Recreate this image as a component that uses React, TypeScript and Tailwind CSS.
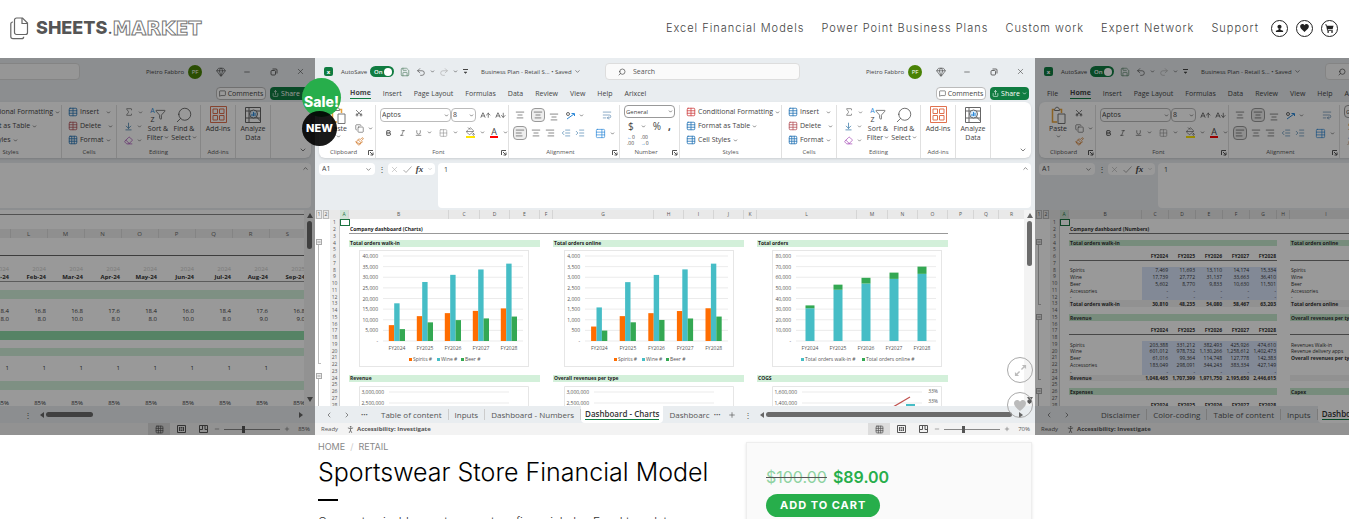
import type { ReactNode } from "react";
import {
  AArrowDown,
  AArrowUp,
  AlignCenter,
  AlignLeft,
  AlignRight,
  ArrowDownToLine,
  Bold,
  ChevronDown,
  ChevronLeft,
  ChevronRight,
  ChevronUp,
  Copy,
  Eraser,
  Filter,
  Gem,
  Grid2x2,
  Grid3x3,
  IndentDecrease,
  IndentIncrease,
  Italic,
  MessageSquare,
  Minus,
  PaintBucket,
  Paintbrush,
  PersonStanding,
  Plus,
  Redo2,
  Save,
  Scissors,
  Search,
  Share,
  Sigma,
  Table,
  TableProperties,
  Underline,
  Undo2,
  WrapText,
  X,
} from "lucide-react";

const navLinks = [
  "Excel Financial Models",
  "Power Point Business Plans",
  "Custom work",
  "Expert Network",
  "Support",
];

const ribbonTabs = [
  "File",
  "Home",
  "Insert",
  "Page Layout",
  "Formulas",
  "Data",
  "Review",
  "View",
  "Help",
  "Arixcel",
];

const years = ["FY2024", "FY2025", "FY2026", "FY2027", "FY2028"];

const ORANGE = "#ff6d01";
const TEAL = "#46bdc6";
const GREEN = "#34a853";

type Series = { name: string; color: string; values: number[] };

type ChartProps = {
  max: number;
  step: number;
  series: Series[];
  stacked?: boolean;
  plotLeft: number;
  legendX: number[];
};

const walkInSeries: Series[] = [
  { name: "Spirits #", color: ORANGE, values: [7469, 11693, 13110, 14174, 15334] },
  { name: "Wine #", color: TEAL, values: [17739, 27772, 31137, 33663, 36410] },
  { name: "Beer #", color: GREEN, values: [5602, 8770, 9833, 10630, 11501] },
];

const onlineSeries: Series[] = [
  { name: "Spirits #", color: ORANGE, values: [680, 1170, 1310, 1410, 1540] },
  { name: "Wine #", color: TEAL, values: [1580, 2770, 3110, 3370, 3640] },
  { name: "Beer #", color: GREEN, values: [490, 880, 990, 1060, 1150] },
];

const totalSeries: Series[] = [
  { name: "Total orders walk-in #", color: TEAL, values: [30810, 48235, 54080, 58467, 63203] },
  { name: "Total orders online #", color: GREEN, values: [2700, 4800, 5400, 5900, 6800] },
];

function BarChart({ max, step, series, stacked, plotLeft, legendX }: ChartProps) {
  const base = 91;
  const plotHeight = 85;
  const pitch = (164 - plotLeft) / 5;
  const ticks = Array.from({ length: max / step + 1 }, (_, i) => i * step);
  const y = (value: number) => base - (value / max) * plotHeight;

  return (
    <svg viewBox="0 0 170 117" className="h-[117px] w-[170px]" fontSize="5" fill="#555">
      <rect x="0.5" y="0.5" width="169" height="116" fill="none" stroke="#e6e6e6" />
      {ticks.map((tick) => (
        <g key={tick}>
          <line x1={plotLeft} x2="164" y1={y(tick)} y2={y(tick)} stroke="#e3e3e3" strokeWidth="0.7" />
          <text x={plotLeft - 5} y={y(tick) + 2} textAnchor="end">
            {tick === 0 ? "-" : tick.toLocaleString("en-US")}
          </text>
        </g>
      ))}
      {years.map((year, i) => {
        const center = plotLeft + pitch * (i + 0.5);
        let stack = 0;
        return (
          <g key={year}>
            {series.map((s, j) => {
              const bottom = stack;
              if (stacked) stack += s.values[i];
              return (
                <rect
                  key={s.name}
                  x={stacked ? center - 4.5 : center - 8.2 + j * 5.4}
                  y={y(bottom + s.values[i])}
                  width={stacked ? 9 : 5.4}
                  height={(s.values[i] / max) * plotHeight}
                  fill={s.color}
                />
              );
            })}
            <text x={center} y="100" textAnchor="middle">
              {year}
            </text>
          </g>
        );
      })}
      {series.map((s, i) => (
        <g key={s.name}>
          <rect x={legendX[i]} y="108" width="3" height="3" fill={s.color} />
          <text x={legendX[i] + 4} y="111">
            {s.name}
          </text>
        </g>
      ))}
    </svg>
  );
}

function CutChart({ labels, right }: { labels: string[]; right?: string[] }) {
  return (
    <svg viewBox="0 0 170 22" className="h-[22px] w-[170px]" fontSize="5" fill="#555">
      <path d="M.5 22V.5h169V22" fill="none" stroke="#e6e6e6" />
      {labels.map((label, i) => (
        <g key={label}>
          <line x1="30" x2="150" y1={6 + i * 11} y2={6 + i * 11} stroke="#e3e3e3" strokeWidth="0.7" />
          <text x="25" y={8 + i * 11} textAnchor="end">
            {label}
          </text>
        </g>
      ))}
      {right && (
        <>
          {right.map((label, i) => (
            <text key={i} x="166" y={7 + i * 10} textAnchor="end">
              {label}
            </text>
          ))}
          <path d="M121 21 138 11" stroke="#c0504d" strokeWidth="1.2" />
          <rect x="134" y="18" width="9" height="3" fill={TEAL} />
        </>
      )}
    </svg>
  );
}

function DashboardColumn({ title, nextTitle, inset, chart, next }: {
  title: string;
  nextTitle: string;
  inset: string;
  chart: ReactNode;
  next: ReactNode;
}) {
  return (
    <div className="flex w-[191px] shrink-0 flex-col">
      <h3 className="h-[7px] bg-[#d3f0da] pl-px text-[5px] leading-[7px] font-bold text-[#222]">{title}</h3>
      <div className={`flex pt-[3px] pb-[8px] ${inset}`}>{chart}</div>
      <h3 className="h-[7px] bg-[#d3f0da] pl-px text-[5px] leading-[7px] font-bold text-[#222]">{nextTitle}</h3>
      <div className={`flex pt-1 ${inset}`}>{next}</div>
    </div>
  );
}

function Dashboard() {
  return (
    <div className="flex-1 overflow-hidden pl-[9px]">
      <p className="mt-[7px] w-[599px] border-b border-[#999] pl-px text-[5px] leading-[7px] font-bold text-[#222]">
        Company dashboard (Charts)
      </p>
      <div className="flex gap-[13px] pt-[6px]">
        <DashboardColumn
          title="Total orders walk-in"
          nextTitle="Revenue"
          inset="pl-[10px]"
          chart={<BarChart max={40000} step={5000} series={walkInSeries} plotLeft={24} legendX={[50, 78, 102]} />}
          next={<CutChart labels={["3,000,000", "2,500,000"]} />}
        />
        <DashboardColumn
          title="Total orders online"
          nextTitle="Overall revenues per type"
          inset="pl-[11px]"
          chart={<BarChart max={4000} step={500} series={onlineSeries} plotLeft={21} legendX={[50, 78, 102]} />}
          next={<CutChart labels={["3,000,000", "2,500,000"]} />}
        />
        <DashboardColumn
          title="Total orders"
          nextTitle="COGS"
          inset="pl-[15px]"
          chart={<BarChart max={80000} step={10000} series={totalSeries} stacked plotLeft={24} legendX={[29, 90]} />}
          next={<CutChart labels={["1,600,000", "1,400,000"]} right={["33%", "33%"]} />}
        />
      </div>
    </div>
  );
}

type NumberRow = {
  kind?: "title" | "section" | "years" | "input" | "total";
  label?: string;
  values?: string[];
  side?: string;
};

const dashes = ["-", "-", "-", "-", "-"];

const numberRows: NumberRow[] = [
  {},
  { kind: "title", label: "Company dashboard (Numbers)" },
  {},
  { kind: "section", label: "Total orders walk-in", side: "Total orders online" },
  {},
  { kind: "years", values: years },
  {},
  { kind: "input", label: "Spirits", values: ["7,469", "11,693", "13,110", "14,174", "15,334"], side: "Spirits" },
  { kind: "input", label: "Wine", values: ["17,739", "27,772", "31,137", "33,663", "36,410"], side: "Wine" },
  { kind: "input", label: "Beer", values: ["5,602", "8,770", "9,833", "10,630", "11,501"], side: "Beer" },
  { kind: "input", label: "Accessories", values: dashes, side: "Accessories" },
  { kind: "input", label: "-", values: dashes, side: "-" },
  { kind: "total", label: "Total orders walk-in", values: ["30,810", "48,235", "54,080", "58,467", "63,203"], side: "Total orders online" },
  {},
  { kind: "section", label: "Revenue", side: "Overall revenues per type" },
  {},
  { kind: "years", values: years },
  {},
  { kind: "input", label: "Spirits", values: ["203,388", "331,212", "382,493", "425,926", "474,610"], side: "Revenues Walk-in" },
  { kind: "input", label: "Wine", values: ["601,012", "978,732", "1,130,266", "1,258,612", "1,402,473"], side: "Revenue delivery apps" },
  { kind: "input", label: "Beer", values: ["61,016", "99,364", "114,748", "127,778", "142,383"], side: "Overall revenues per type" },
  { kind: "input", label: "Accessories", values: ["183,049", "298,091", "344,243", "383,334", "427,149"] },
  { kind: "input", label: "-", values: dashes },
  { kind: "total", label: "Revenue", values: ["1,048,465", "1,707,399", "1,971,750", "2,195,650", "2,446,615"] },
  {},
  { kind: "section", label: "Expenses", side: "Capex" },
  {},
  { kind: "years", values: years },
];

function NumbersSheet() {
  return (
    <div className="flex-1 overflow-hidden">
      <table className="w-[675px] table-fixed border-collapse text-[5px] leading-[6px] text-[#333]">
        <colgroup>
          <col className="w-[9px]" />
          <col className="w-[73px]" />
          {years.map((year) => (
            <col key={year} className="w-[27px]" />
          ))}
          <col className="w-[13px]" />
          <col />
        </colgroup>
        <tbody>
          {numberRows.map((row, i) => {
            const strong = row.kind && row.kind !== "input";
            const fill =
              row.kind === "section" ? "bg-[#c6e9cf]" : row.kind === "total" ? "bg-[#f2f2f2]" : "";
            const rule = row.kind === "title" || row.kind === "years" ? "border-b border-[#777]" : "";
            return (
              <tr key={i} className={i % 4 === 3 ? "h-[6px]" : "h-[7px]"}>
                <td className="p-0" />
                <td className={`overflow-visible p-0 pl-px whitespace-nowrap ${fill} ${rule} ${strong ? "font-bold" : ""}`}>
                  {row.label}
                </td>
                {years.map((year, j) => (
                  <td
                    key={year}
                    className={`p-0 pr-px text-right ${fill} ${rule} ${strong ? "font-bold" : ""} ${row.kind === "input" ? "bg-[#d9e5fb]" : ""}`}
                  >
                    {row.values?.[j]}
                  </td>
                ))}
                <td className={`p-0 ${row.kind === "title" ? rule : ""}`} />
                <td className={`p-0 pl-px ${fill} ${rule} ${strong || row.side?.startsWith("Overall") ? "font-bold" : ""}`}>
                  {row.side}
                </td>
              </tr>
            );
          })}
        </tbody>
      </table>
    </div>
  );
}

const letters = "BCDEFGHIJKLMNOPQRS".split("");
const months = [
  "Apr-23", "May-23", "Jun-23", "Jul-23", "Aug-23", "Sep-23", "Oct-23", "Nov-23", "Dec-23",
  "Jan-24", "Feb-24", "Mar-24", "Apr-24", "May-24", "Jun-24", "Jul-24", "Aug-24", "Sep-24",
];
const hours = ["18.4", "16.8", "16.8", "17.6", "18.4", "16.0", "18.4", "17.6", "16.8"];
const staff = ["8.0", "8.0", "10.0", "8.0", "8.0", "10.0", "8.0", "9.0", "9.0"];

function MonthRow({ height, text, cells, fill = "" }: {
  height: string;
  text?: string;
  cells?: (index: number) => string;
  fill?: string;
}) {
  return (
    <tr className={`${height} ${fill}`}>
      <td className="p-0" />
      {letters.map((letter, i) => (
        <td key={letter} className={`p-0 pr-px text-right ${text ?? ""}`}>
          {cells?.(i)}
        </td>
      ))}
    </tr>
  );
}

function MonthlySheet() {
  return (
    <div className="flex h-[196px] bg-white">
      <div className="mt-[4px] flex-1 overflow-hidden border-t border-[#888] pt-[14px]">
        <table className="w-[711px] table-fixed border-collapse text-[6px] leading-[8px] text-[#333]">
          <colgroup>
            <col className="w-[45px]" />
            {letters.map((letter) => (
              <col key={letter} className="w-[37px]" />
            ))}
          </colgroup>
          <thead>
            <tr className="h-[9px] bg-[#eee] text-[#666]">
              <th className="p-0" />
              {letters.map((letter) => (
                <th key={letter} className="border-r border-[#ddd] p-0 font-normal">
                  {letter}
                </th>
              ))}
            </tr>
          </thead>
          <tbody>
            <MonthRow height="h-[17px]" />
            <MonthRow height="h-[10px]" fill="border-t border-[#666]" />
            <MonthRow height="h-[8px]" text="text-[#ccc]" cells={(i) => (i < 17 ? "2024" : "2025")} />
            <MonthRow height="h-[8px]" text="font-bold" fill="border-b border-[#999]" cells={(i) => months[i]} />
            <MonthRow height="h-[8px]" />
            <MonthRow height="h-[9px]" fill="bg-[#d3f0da]" />
            <MonthRow height="h-[8px]" />
            <MonthRow height="h-[8px]" cells={(i) => hours[i % 9]} />
            <MonthRow height="h-[8px]" cells={(i) => staff[i % 9]} />
            <MonthRow height="h-[8px]" />
            <MonthRow height="h-[9px]" fill="bg-[#8fdba9]" />
            <MonthRow height="h-[8px]" />
            <MonthRow height="h-[8px]" fill="bg-[#d3f0da]" />
            <MonthRow height="h-[8px]" />
            <MonthRow height="h-[8px]" cells={(i) => (i < 17 ? "1" : "")} />
            <MonthRow height="h-[9px]" />
            <MonthRow height="h-[9px]" fill="bg-[#d3f0da]" />
            <MonthRow height="h-[9px]" />
            <MonthRow height="h-[9px]" cells={() => "85%"} />
          </tbody>
        </table>
      </div>
      <VerticalScroll thumb="h-[28px]" />
    </div>
  );
}

function VerticalScroll({ thumb }: { thumb: string }) {
  return (
    <div className="flex w-[11px] shrink-0 flex-col items-center bg-[#f3f3f3] pt-[3px]">
      <svg viewBox="0 0 6 5" className="h-[5px] w-[6px] fill-[#666]">
        <path d="M3 0 6 5H0z" />
      </svg>
      <div className={`mt-[3px] w-[5px] rounded-full bg-[#6b6b6b] ${thumb}`} />
      <svg viewBox="0 0 6 5" className="mt-auto mb-1 h-[5px] w-[6px] fill-[#666]">
        <path d="M0 0H6L3 5z" />
      </svg>
    </div>
  );
}

const chartColumns: [string, string][] = [
  ["A", "w-[9px]"], ["B", "w-[100px]"], ["C", "w-[31px]"], ["D", "w-[30px]"], ["E", "w-[30px]"],
  ["F", "w-[13px]"], ["G", "w-[101px]"], ["H", "w-[30px]"], ["I", "w-[30px]"], ["J", "w-[30px]"],
  ["K", "w-[13px]"], ["L", "w-[100px]"], ["M", "w-[31px]"], ["N", "w-[30px]"], ["O", "w-[30px]"],
  ["P", "w-[26px]"], ["Q", "w-[25px]"], ["R", "w-[26px]"],
];

const numberColumns: [string, string][] = [
  ["A", "w-[9px]"], ["B", "w-[73px]"], ["C", "w-[27px]"], ["D", "w-[27px]"], ["E", "w-[27px]"],
  ["F", "w-[27px]"], ["G", "w-[27px]"], ["H", "w-[13px]"], ["I", "w-[73px]"], ["J", "w-[27px]"],
];

// outline brackets to the left of the row numbers
type Bracket = { before: string; height: string };

function GridSheet({ columns, brackets, children }: {
  columns: [string, string][];
  brackets: Bracket[];
  children: ReactNode;
}) {
  return (
    <div className="flex h-[196px] overflow-hidden bg-white">
      <div className="flex flex-1 flex-col overflow-hidden">
        <div className="flex h-[9px] shrink-0 bg-[#e9e9e9] text-[5px] leading-[9px] text-[#555]">
          <div className="flex w-[25px] shrink-0 gap-px pl-px">
            <span className="w-[6px] border border-[#bbb] text-center leading-[7px]">1</span>
            <span className="w-[6px] border border-[#bbb] text-center leading-[7px]">2</span>
          </div>
          {columns.map(([name, width]) => (
            <span
              key={name}
              className={`shrink-0 border-r border-[#d5d5d5] text-center ${width} ${name === "A" ? "bg-[#cfe3d6] text-[#1a7340]" : ""}`}
            >
              {name}
            </span>
          ))}
        </div>
        <div className="flex flex-1">
          <div className="flex w-[15px] shrink-0 flex-col pl-px">
            {brackets.map((bracket, i) => (
              <div key={i} className={bracket.before}>
                <span className="flex h-[6px] w-[6px] items-center justify-center border border-[#aaa] bg-[#eee]">
                  <Minus size={4} />
                </span>
                <div className={`ml-[2px] w-[3px] border-b border-l border-[#bbb] ${bracket.height}`} />
              </div>
            ))}
          </div>
          <div className="w-[10px] shrink-0 border-r border-[#ccc] bg-[#eee] text-center text-[5px] text-[#555]">
            {numberRows.map((_, i) => (
              <div key={i} className={i % 4 === 3 ? "h-[6px] leading-[6px]" : "h-[7px] leading-[7px]"}>
                {i + 1}
              </div>
            ))}
          </div>
          <div className="mr-[-10px] h-[7px] w-[10px] shrink-0 border border-[#1a7340]" />
          {children}
        </div>
      </div>
      <VerticalScroll thumb="h-[45px]" />
    </div>
  );
}

function Caret() {
  return <ChevronDown size={5} strokeWidth={3} className="shrink-0" />;
}

function RibbonGroup({ width, label, launcher, children }: {
  width: string;
  label: string;
  launcher?: boolean;
  children: ReactNode;
}) {
  return (
    <div className={`flex shrink-0 flex-col border-r border-[#e0e0e0] ${width}`}>
      <div className="h-[43px]">{children}</div>
      <div className="flex h-[9px] items-center justify-center text-[6px] leading-[9px] text-[#555]">
        <span className="flex-1 text-center">{label}</span>
        {launcher && (
          <svg viewBox="0 0 6 6" className="mr-px h-[6px] w-[6px]" fill="none" stroke="#555">
            <path d="M.5 5V.5H5M2 2l3 3M5 2.500V5H2.500" />
          </svg>
        )}
      </div>
    </div>
  );
}

function StyleRow({ icon, label, gap = "" }: { icon: ReactNode; label: string; gap?: string }) {
  return (
    <button type="button" className="flex h-[14px] items-center gap-[2px] text-[7px]">
      {icon}
      <span className={`whitespace-nowrap ${gap}`}>{label}</span>
      <Caret />
    </button>
  );
}

function Ribbon() {
  return (
    <div className="mx-1 flex h-[56px] rounded-md bg-white pt-[3px] text-[#444] shadow-sm">
      <RibbonGroup width="w-[57px]" label="Clipboard" launcher>
        <div className="flex gap-[7px] pl-[9px]">
          <button type="button" className="flex w-[20px] flex-col items-center pt-px text-[7px] leading-[10px]">
            <svg viewBox="0 0 15 18" className="h-[18px] w-[15px]" fill="none">
              <path d="M6 16H1.500V3.500h9V7" stroke="#e8a33d" strokeWidth="1.500" />
              <path d="M3.500 4.500c0-2 1-2.500 1.500-2.500C5 .8 7 .8 7 2c.800 0 1.500.5 1.500 2.500z" fill="#fff" stroke="#777" />
              <path d="M7 8h7v9.500H7z" fill="#fff" stroke="#777" />
            </svg>
            Paste
            <Caret />
          </button>
          <div className="flex flex-col">
            <Scissors size={8} className="mt-1 mb-1 -rotate-90" />
            <span className="flex h-[15px] items-center gap-1">
              <Copy size={9} strokeWidth={1.500} />
              <Caret />
            </span>
            <Paintbrush size={9} className="mt-px text-[#d07a2c]" />
          </div>
        </div>
      </RibbonGroup>
      <RibbonGroup width="w-[133px]" label="Font" launcher>
        <div className="flex items-center gap-1 pt-[3px] pl-1">
          <div className="flex">
            <span className="flex h-[14px] w-[71px] items-center rounded-sm border border-[#bbb] pr-px pl-px">
              <select aria-label="Font" className="w-full appearance-none text-[7px] leading-[8px]">
                <option>Aptos</option>
              </select>
              <Caret />
            </span>
            <span className="flex h-[14px] w-[25px] items-center rounded-sm border border-[#bbb] pr-px pl-px">
              <select aria-label="Font size" className="w-full appearance-none text-[7px] leading-[8px]">
                <option>8</option>
              </select>
              <Caret />
            </span>
          </div>
          <AArrowUp size={11} strokeWidth={1.500} />
          <AArrowDown size={11} strokeWidth={1.500} />
        </div>
        <div className="flex items-center gap-[5px] pt-[5px] pl-[9px]">
          <Bold size={8} strokeWidth={3} />
          <Italic size={8} className="ml-[2px]" />
          <Underline size={8} className="ml-1" />
          <Caret />
          <Grid2x2 size={10} strokeWidth={1.500} className="ml-[2px] text-[#888]" />
          <Caret />
          <span className="ml-[3px] flex flex-col border-b-2 border-[#ffe600]">
            <PaintBucket size={9} strokeWidth={1.500} />
          </span>
          <Caret />
          <span className="w-[9px] border-b-2 border-[#f00] text-center text-[9px] leading-[9px]">A</span>
          <Caret />
        </div>
      </RibbonGroup>
      <RibbonGroup width="w-[111px]" label="Alignment" launcher>
        <div className="flex items-center gap-1 pt-[3px] pl-1">
          <span className="flex w-[14px] justify-center">
            <AlignCenter size={10} strokeWidth={1.500} />
          </span>
          <span className="flex h-[14px] w-[14px] items-center justify-center rounded-sm border border-[#999] bg-[#eee]">
            <AlignCenter size={10} strokeWidth={1.500} />
          </span>
          <AlignCenter size={10} strokeWidth={1.500} className="mt-1" />
          <svg viewBox="0 0 10 10" className="ml-[2px] h-[10px] w-[10px]" fill="none" stroke="#2b88d8">
            <path d="M2 9 9 4M6.500 3.500H9.500V6" />
            <circle cx="3" cy="4" r="1.500" stroke="#666" />
          </svg>
          <Caret />
          <WrapText size={10} strokeWidth={1.500} className="ml-[14px] text-[#4a7ca6]" />
        </div>
        <div className="flex items-center gap-1 pt-1 pl-1">
          <span className="flex h-[14px] w-[14px] items-center justify-center rounded-sm border border-[#999] bg-[#eee]">
            <AlignLeft size={10} strokeWidth={1.500} />
          </span>
          <AlignCenter size={10} strokeWidth={1.500} />
          <AlignRight size={10} strokeWidth={1.500} />
          <IndentDecrease size={10} strokeWidth={1.500} className="ml-[2px] text-[#3a79a8]" />
          <IndentIncrease size={10} strokeWidth={1.500} className="text-[#3a79a8]" />
          <TableProperties size={11} strokeWidth={1.500} className="ml-[6px] text-[#2b88d8]" />
          <Caret />
        </div>
      </RibbonGroup>
      <RibbonGroup width="w-[60px]" label="Number" launcher>
        <div className="flex flex-col pl-1">
          <span className="flex h-[13px] w-[51px] items-center rounded-sm border border-[#999] px-px">
            <select aria-label="Number format" className="w-full appearance-none text-[6px] leading-[8px]">
              <option>General</option>
            </select>
            <Caret />
          </span>
          <div className="flex h-[16px] items-center gap-[7px] pl-1 text-[10px] leading-[12px]">
            $<Caret />
            <span>%</span>
            <b>,</b>
          </div>
          <div className="flex gap-[6px] pl-[3px] text-[5px] leading-[6px]">
            <span>
              <b className="text-[#2b88d8]">←</b>0<br />.00
            </span>
            <span>
              .00
              <br />
              <b className="text-[#2b88d8]">→</b>0
            </span>
          </div>
        </div>
      </RibbonGroup>
      <RibbonGroup width="w-[102px]" label="Styles">
        <div className="pl-[6px]">
          <StyleRow icon={<Table size={10} className="text-[#d0494a]" />} label="Conditional Formatting" />
          <StyleRow icon={<Table size={10} className="text-[#2b78b8]" />} label="Format as Table" />
          <StyleRow icon={<TableProperties size={10} className="text-[#2b78b8]" />} label="Cell Styles" />
        </div>
      </RibbonGroup>
      <RibbonGroup width="w-[55px]" label="Cells">
        <div className="pl-[6px]">
          <StyleRow icon={<Table size={10} className="text-[#2b78b8]" />} label="Insert" gap="pr-[5px]" />
          <StyleRow icon={<Table size={10} className="text-[#b85a60]" />} label="Delete" gap="pr-[5px]" />
          <StyleRow icon={<Grid3x3 size={10} className="text-[#2b78b8]" />} label="Format" />
        </div>
      </RibbonGroup>
      <RibbonGroup width="w-[84px]" label="Editing">
        <div className="flex pl-[7px]">
          <div className="flex w-[22px] flex-col text-[#555]">
            <span className="flex h-[14px] items-center gap-1">
              <Sigma size={10} strokeWidth={1.500} />
              <Caret />
            </span>
            <span className="flex h-[14px] items-center gap-1">
              <ArrowDownToLine size={9} className="text-[#3a79a8]" />
              <Caret />
            </span>
            <span className="flex h-[14px] items-center gap-1">
              <Eraser size={9} className="text-[#a84fb8]" />
              <Caret />
            </span>
          </div>
          <button type="button" className="flex w-[24px] flex-col items-center text-[7px] leading-[9px]">
            <span className="flex h-[19px] items-center">
              <span className="flex flex-col text-[7px] leading-[9px]">
                <span className="text-[#2b88d8]">A</span>
                <span>Z</span>
              </span>
              <Filter size={11} strokeWidth={1.500} />
            </span>
            <span className="whitespace-nowrap">Sort &amp;</span>
            <span className="flex items-center gap-px">
              Filter
              <Caret />
            </span>
          </button>
          <button type="button" className="flex w-[28px] flex-col items-center text-[7px] leading-[9px]">
            <span className="flex h-[19px] items-center">
              <Search size={18} strokeWidth={1} className="-scale-x-100" />
            </span>
            <span className="whitespace-nowrap">Find &amp;</span>
            <span className="flex items-center gap-px">
              Select
              <Caret />
            </span>
          </button>
        </div>
      </RibbonGroup>
      <RibbonGroup width="w-[35px]" label="Add-ins">
        <button type="button" className="flex w-full flex-col items-center text-[7px] leading-[9px]">
          <svg viewBox="0 0 17 17" className="mt-px mb-px h-[17px] w-[17px]" fill="none" stroke="#e0714f">
            <path d="M.5.500h16v16H.500z" />
            <path d="M3 3h4.500v4.500H3zM9.500 3H14v4.500H9.500zM3 9.500h4.500V14H3zM9.500 9.500H14V14H9.500z" />
          </svg>
          Add-ins
        </button>
      </RibbonGroup>
      <RibbonGroup width="w-[35px]" label="">
        <button type="button" className="flex w-full flex-col items-center text-[7px] leading-[9px]">
          <svg viewBox="0 0 18 18" className="mt-px h-[18px] w-[18px]" fill="none" stroke="#666">
            <path d="M1.500 1.500h15v15h-15zM1.500 5h15M1.500 12h15M5 1.500v15" />
            <circle cx="9.500" cy="8" r="4" fill="#d6e9f8" />
            <path d="M8 10V8M9.500 10V6M11 10V7" stroke="#2b88d8" />
            <path d="m12.500 11 4 4" />
          </svg>
          Analyze
          <span>Data</span>
        </button>
      </RibbonGroup>
      <div className="flex flex-1 items-end justify-end pr-1 pb-1">
        <ChevronDown size={8} />
      </div>
    </div>
  );
}

function WindowTop() {
  return (
    <>
      <div className="flex h-[27px] shrink-0 items-center pl-[9px] text-[6px] leading-[8px] text-[#444]">
        <span className="flex h-[9px] w-[9px] items-center justify-center rounded-xs bg-[#107c41] text-[6px] font-bold text-white">
          x
        </span>
        <span className="w-[37px] pl-2">AutoSave</span>
        <button
          type="button"
          role="switch"
          aria-checked="true"
          className="flex h-[11px] w-[24px] items-center justify-between rounded-full bg-[#107c41] pr-[2px] pl-1 text-[6px] font-semibold text-white"
        >
          On
          <span className="h-[8px] w-[8px] rounded-full bg-white" />
        </button>
        <div className="flex w-[87px] items-center gap-1 pl-[6px]">
          <Save size={10} strokeWidth={1.500} className="text-[#4b7a5d]" />
          <Undo2 size={10} strokeWidth={1.500} className="ml-[2px]" />
          <Caret />
          <Redo2 size={10} strokeWidth={1.500} className="text-[#aaa]" />
          <Caret />
          <svg viewBox="0 0 5 5" className="ml-px h-[5px] w-[5px]" stroke="#444" fill="#444">
            <path d="M0 .5h5" />
            <path d="M1 3h3L2.500 4.500z" strokeWidth=".5" />
          </svg>
        </div>
        <span className="flex w-[124px] items-center gap-[2px] whitespace-nowrap">
          Business Plan - Retail S... • Saved
          <ChevronDown size={7} />
        </span>
        <label className="flex h-[17px] w-[195px] items-center gap-[7px] rounded-sm border border-[#ddd] bg-[#fafafa] pl-3">
          <Search size={8} className="shrink-0 -scale-x-100" />
          <input aria-label="Search" placeholder="Search" className="w-full text-[7px] leading-[9px] placeholder:text-[#555]" />
        </label>
        <div className="ml-auto flex items-center pr-[10px]">
          <span className="pr-1 whitespace-nowrap">Pietro Fabbro</span>
          <span className="flex h-[14px] w-[14px] items-center justify-center rounded-full bg-[#498205] text-white">PF</span>
          <Gem size={10} strokeWidth={1.500} className="ml-[14px]" />
          <Minus size={8} className="ml-[17px]" />
          <svg viewBox="0 0 8 8" className="ml-[19px] h-[8px] w-[8px]" fill="none" stroke="currentColor" strokeWidth=".8">
            <rect x="1" y="2.500" width="4.500" height="4.500" rx="1" />
            <path d="M2.500 1H6a1 1 0 0 1 1 1v3.500" />
          </svg>
          <X size={9} strokeWidth={1.500} className="ml-[18px]" />
        </div>
      </div>
      <div className="flex h-[17px] shrink-0 items-center gap-3 pl-3 text-[7px] leading-[10px] text-[#444]">
        {ribbonTabs.map((tab) => (
          <button
            key={tab}
            type="button"
            className={tab === "Home" ? "border-b border-[#107c41] font-bold whitespace-nowrap" : "whitespace-nowrap"}
          >
            {tab}
          </button>
        ))}
        <div className="ml-auto flex gap-1 pr-[6px]">
          <button type="button" className="flex h-[13px] w-[50px] items-center justify-center gap-[2px] rounded-sm border border-[#bbb] bg-white">
            <MessageSquare size={7} />
            Comments
          </button>
          <button type="button" className="flex h-[13px] w-[39px] items-center justify-center gap-[2px] rounded-sm bg-[#107c41] text-white">
            <Share size={7} />
            Share
            <Caret />
          </button>
        </div>
      </div>
      <Ribbon />
      <div className="flex h-[52px] shrink-0 pt-[5px] pr-1 pb-[2px] pl-1 text-[#444]">
        <label className="flex h-[12px] w-[56px] items-center rounded-sm bg-white px-[3px]">
          <input aria-label="Name box" defaultValue="A1" className="w-full text-[7px] leading-[8px]" />
          <ChevronDown size={7} className="shrink-0" />
        </label>
        <span className="w-[13px] text-center text-[8px] leading-[12px]">⋮</span>
        <div className="flex h-[12px] w-[47px] items-center justify-between rounded-sm bg-white px-[2px] text-[#aaa]">
          <X size={9} strokeWidth={1.500} />
          <svg viewBox="0 0 9 7" className="h-[7px] w-[9px]" fill="none" stroke="currentColor">
            <path d="m.5 4 2.500 2.500L8.500.5" />
          </svg>
          <i className="font-['Liberation_Serif',serif] text-[9px] leading-[10px] font-bold text-[#444]">fx</i>
          <ChevronDown size={6} />
        </div>
        <div className="ml-[3px] flex flex-1 justify-between rounded-sm bg-white pt-[2px] pr-[2px] pl-[6px] text-[7px] leading-[9px]">
          1
          <ChevronUp size={7} />
        </div>
      </div>
    </>
  );
}

type ExcelWindowProps = {
  tabs: string[];
  active?: string;
  more?: boolean;
  zoom: string;
  thumb: string;
  children: ReactNode;
};

function ExcelWindow({ tabs, active, more, zoom, thumb, children }: ExcelWindowProps) {
  return (
    <div className="flex h-[377px] flex-col overflow-hidden bg-[#e9edf0] font-['Open_Sans','Noto_Sans',sans-serif]">
      <WindowTop />
      {children}
      <div className="flex h-[17px] shrink-0 items-center text-[8px] leading-[10px] text-[#555]">
        <div className="flex w-[425px] shrink-0 items-center overflow-hidden">
          <div className="flex w-[60px] shrink-0 items-center gap-[10px] pl-[10px]">
            <ChevronLeft size={8} />
            <ChevronRight size={8} />
            {more && <span className="text-[6px]">•••</span>}
          </div>
          {tabs.map((tab) => (
            <button
              key={tab}
              type="button"
              className={
                tab === active
                  ? "flex h-[17px] shrink-0 items-center rounded-b-sm bg-white px-1 font-semibold text-[#333]"
                  : "flex h-[11px] shrink-0 items-center border-r border-[#ccc] px-[6px] last-of-type:border-0 last-of-type:pr-1"
              }
            >
              <span className={tab === active ? "border-b border-[#107c41] whitespace-nowrap" : "whitespace-nowrap"}>{tab}</span>
            </button>
          ))}
          {more && (
            <>
              <span className="text-[6px]">•••</span>
              <Plus size={8} className="ml-2 shrink-0" />
            </>
          )}
        </div>
        <span className="w-[16px] text-center">⋮</span>
        <div className="mr-3 flex flex-1 items-center gap-[2px]">
          <svg viewBox="0 0 4 6" className="ml-1 h-[6px] w-1 fill-[#666]">
            <path d="M4 0v6L0 3z" />
          </svg>
          <div className={`h-[5px] rounded-full bg-[#6b6b6b] ${thumb}`} />
          <svg viewBox="0 0 4 6" className="ml-auto h-[6px] w-1 fill-[#666]">
            <path d="M0 0v6l4-3z" />
          </svg>
        </div>
      </div>
      <div className="flex h-[12px] shrink-0 items-center bg-[#f3f3f3] pl-[6px] text-[6px] leading-[8px] text-[#555]">
        <span className="w-[25px]">Ready</span>
        <PersonStanding size={9} />
        <span className="pl-[2px] font-bold">Accessibility: Investigate</span>
        <div className="ml-auto flex items-center pr-[5px]">
          <span className="flex h-[12px] w-[22px] items-center justify-center bg-[#ddd]">
            <Grid3x3 size={9} />
          </span>
          <span className="flex w-[22px] justify-center">
            <svg viewBox="0 0 9 8" className="h-[8px] w-[9px]" fill="none" stroke="currentColor">
              <path d="M.5.5h8v7h-8zM2.500 2v4M6.500 2v4M3.500 2.500h2M3.500 4h2M3.500 5.500h2" />
            </svg>
          </span>
          <span className="flex w-[22px] justify-center">
            <svg viewBox="0 0 9 8" className="h-[8px] w-[9px]" fill="none" stroke="currentColor">
              <path d="M.5.5h8v7h-8zM3.500.5v4h-3M6 .5v4h2.500" />
            </svg>
          </span>
          <Minus size={6} className="mr-1" />
          <input
            type="range"
            aria-label="Zoom"
            min={10}
            max={190}
            defaultValue={70}
            className="h-px w-[56px] appearance-none bg-[#888] [&::-webkit-slider-thumb]:h-[7px] [&::-webkit-slider-thumb]:w-[3px] [&::-webkit-slider-thumb]:appearance-none [&::-webkit-slider-thumb]:bg-[#555]"
          />
          <Plus size={6} className="ml-1" />
          <span className="w-[20px] text-right">{zoom}</span>
        </div>
      </div>
    </div>
  );
}

function RoundIcon({ label, children }: { label: string; children: ReactNode }) {
  return (
    <a
      href="#"
      aria-label={label}
      className="flex h-[17px] w-[17px] items-center justify-center rounded-full border border-[#222] text-[#222]"
    >
      {children}
    </a>
  );
}

function HeartIcon({ className }: { className: string }) {
  return (
    <svg viewBox="0 0 24 22" className={className} fill="currentColor">
      <path d="M12 22C5 16 0 12 0 6.500 0 2.500 3 0 6.200 0 8.600 0 10.800 1.300 12 3.500 13.200 1.300 15.400 0 17.800 0 21 0 24 2.500 24 6.500 24 12 19 16 12 22z" />
    </svg>
  );
}

function Header() {
  return (
    <header className="flex h-[58px] items-center justify-between bg-white pr-[11px] pb-[2px] pl-[10px]">
      <a href="#" className="flex items-center text-[18px] leading-[20px] text-[#555]">
        <svg viewBox="0 0 19 23" className="mr-[7px] h-[23px] w-[19px]" fill="none" stroke="#666" strokeWidth="1.200">
          <path d="M6.500 1h6l5 5v9.500a2 2 0 0 1-2 2h-9a2 2 0 0 1-2-2V3a2 2 0 0 1 2-2z" />
          <path d="M12 1v5.500h5.500M3 5C1.500 5 .8 6 .8 7v12.500c0 1.300.9 2.200 2.200 2.200h8.500c1.500 0 2.200-.8 2.200-2" />
        </svg>
        <span className="font-extrabold">SHEETS</span>
        <span>.</span>
        <span className="font-['DejaVu_Sans',sans-serif] text-[19px] font-bold text-transparent [-webkit-text-stroke:1px_#777]">
          MARKET
        </span>
      </a>
      <div className="flex items-center">
        <nav className="flex gap-[17px] text-[11px] leading-[16px] font-light tracking-[1px] text-[#444]">
          {navLinks.map((link) => (
            <a key={link} href="#">
              {link}
            </a>
          ))}
        </nav>
        <div className="ml-3 flex gap-2">
          <RoundIcon label="Account">
            <svg viewBox="0 0 10 10" className="h-[9px] w-[9px]" fill="currentColor">
              <circle cx="5" cy="3" r="2.300" />
              <path d="M4 5h2v1.500l3 1V9H1V7.500l3-1z" />
            </svg>
          </RoundIcon>
          <RoundIcon label="Wishlist">
            <HeartIcon className="h-[8px] w-[9px]" />
          </RoundIcon>
          <RoundIcon label="Cart">
            <svg viewBox="0 0 10 10" className="h-[9px] w-[9px]" fill="currentColor">
              <path d="M0 .5h1.800L2.200 2H9.500L8.500 5.500H3l.2 1h5.500v1H2.400L1.200 1.500H0z" />
              <circle cx="3.500" cy="8.800" r="1" />
              <circle cx="7.800" cy="8.800" r="1" />
            </svg>
          </RoundIcon>
        </div>
      </div>
    </header>
  );
}

function Gallery() {
  return (
    <section className="flex justify-center overflow-hidden pl-px">
      <div className="w-[720px] shrink-0 bg-black">
        <div className="opacity-60">
          <ExcelWindow tabs={["Table of content", "Inputs", "Dashboard - Numbers"]} zoom="85%" thumb="w-[47px]">
            <MonthlySheet />
          </ExcelWindow>
        </div>
      </div>
      <div className="relative z-10 w-[720px] shrink-0">
        <ExcelWindow
          tabs={["Table of content", "Inputs", "Dashboard - Numbers", "Dashboard - Charts", "Dashboarc"]}
          active="Dashboard - Charts"
          more
          zoom="70%"
          thumb="w-[246px]"
        >
          <GridSheet
            columns={chartColumns}
            brackets={[
              { before: "pt-[20px]", height: "h-[119px]" },
              { before: "pt-[9px]", height: "h-[40px]" },
            ]}
          >
            <Dashboard />
          </GridSheet>
        </ExcelWindow>
        <div className="absolute top-[20px] -left-[13px] flex flex-col font-['Inter',sans-serif] font-extrabold text-white">
          <span className="flex h-[39px] w-[39px] items-center justify-center rounded-full bg-[#27ae4b] pt-[8px] text-[14px]">
            Sale!
          </span>
          <span className="-mt-[6px] flex h-[35px] w-[35px] items-center justify-center rounded-full bg-black/90 text-[11px]">
            NEW
          </span>
        </div>
        <div className="absolute right-[2px] bottom-[17px] flex flex-col gap-[9px] text-[#bbb]">
          <button
            type="button"
            aria-label="Zoom image"
            className="flex h-[26px] w-[26px] items-center justify-center rounded-full border border-[#aaa]"
          >
            <svg viewBox="0 0 14 14" className="h-[13px] w-[13px]" fill="currentColor">
              <path d="M8.500 1H13v4.500zM1 8.500V13h4.500z" />
              <path d="m8 6 3-3M6 8l-3 3" stroke="currentColor" strokeWidth="1.500" />
            </svg>
          </button>
          <button
            type="button"
            aria-label="Add to wishlist"
            className="relative flex h-[26px] w-[26px] items-center justify-center rounded-full border border-[#aaa]"
          >
            <HeartIcon className="h-[11px] w-[12px]" />
            <span className="absolute top-[7px] right-0 text-[#555]">
              <HeartIcon className="h-[4px] w-[5px]" />
            </span>
          </button>
        </div>
      </div>
      <div className="w-[720px] shrink-0 bg-black">
        <div className="opacity-60">
          <ExcelWindow
            tabs={["Disclaimer", "Color-coding", "Table of content", "Inputs", "Dashboard - Numbers"]}
            active="Dashboard - Numbers"
            zoom="70%"
            thumb="w-[246px]"
          >
            <GridSheet
              columns={numberColumns}
              brackets={[
                { before: "pt-[20px]", height: "h-[60px]" },
                { before: "pt-[9px]", height: "h-[60px]" },
                { before: "pt-[8px]", height: "h-[40px]" },
              ]}
            >
              <NumbersSheet />
            </GridSheet>
          </ExcelWindow>
        </div>
      </div>
    </section>
  );
}

export default function App() {
  return (
    <div className="bg-white font-['Inter','Open_Sans',sans-serif] text-black">
      <Header />
      <main>
        <Gallery />
        <section className="flex justify-center pt-[7px] pl-px">
          <div className="flex w-[720px] justify-between pr-[3px] pl-[3px]">
            <div className="w-[400px]">
              <nav className="flex gap-[5px] text-[9px] leading-[9px] text-[#888]">
                <a href="#">HOME</a>
                <span className="text-[#ccc]">/</span>
                <a href="#">RETAIL</a>
              </nav>
              <h1 className="pt-[3px] text-[25px] leading-[36px] font-light whitespace-nowrap">
                Sportswear Store Financial Model
              </h1>
              <div className="mt-[9px] h-[2px] w-[20px] bg-black" />
              <p className="pt-3 text-[12px] leading-[18px] font-light whitespace-nowrap text-[#333]">
                Our customizable sportswear store financial plan Excel template
              </p>
            </div>
            <div className="w-[286px] border border-[#eee] bg-[#fafafa] px-[19px] pt-[23px] pb-4 shadow-sm">
              <p className="flex gap-[6px] text-[16px] leading-[22px] text-[#27ae4b]">
                <del className="text-[#8fd3a2] decoration-[#555]">$100.00</del>
                <span className="font-semibold">$89.00</span>
              </p>
              <button
                type="button"
                className="mt-[6px] h-[23px] rounded-full bg-[#27ae4b] px-[14px] text-[11px] leading-[23px] font-bold tracking-[1px] text-white"
              >
                ADD TO CART
              </button>
            </div>
          </div>
        </section>
      </main>
    </div>
  );
}
